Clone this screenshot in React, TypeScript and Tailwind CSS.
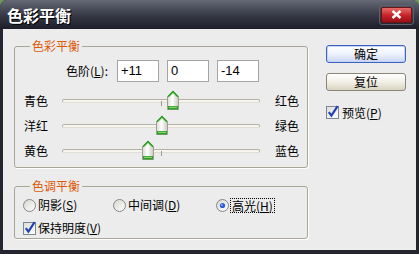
const sliders = [
  { left: "青色", right: "红色", value: 11 },
  { left: "洋红", right: "绿色", value: 0 },
  { left: "黄色", right: "蓝色", value: -14 },
];

function Thumb({ value }: { value: number }) {
  return (
    <svg
      className="absolute top-[-10px]"
      style={{ left: 93 + value }}
      width="12"
      height="20"
      viewBox="0 0 12 20"
    >
      <defs>
        <linearGradient id="thumbBody" x1="0" x2="1" y1="0" y2="0">
          <stop offset="0" stopColor="#dcdcd2" />
          <stop offset="0.45" stopColor="#ffffff" />
          <stop offset="1" stopColor="#c9c9be" />
        </linearGradient>
      </defs>
      <path d="M0.5 6.5 L6 1 L11.5 6.5 V19.5 H0.5 Z" fill="url(#thumbBody)" stroke="#9d9d92" />
      <path d="M1 6.8 L6 1.6 L11 6.8" fill="none" stroke="#2f9e2a" strokeWidth="1.6" />
      <path d="M2.6 6.6 L6 3.2 L9.4 6.6" fill="none" stroke="#8fd67f" strokeWidth="1" />
      <rect x="1" y="16" width="10" height="3.5" fill="#2f9e2a" />
      <rect x="2" y="16.8" width="8" height="1" fill="#9be37c" />
    </svg>
  );
}

function CheckBox() {
  return (
    <svg width="13" height="13" viewBox="0 0 13 13" className="shrink-0 overflow-visible">
      <defs>
        <linearGradient id="cbFill" x1="0" y1="0" x2="1" y2="1">
          <stop offset="0" stopColor="#dcdcd6" />
          <stop offset="1" stopColor="#ffffff" />
        </linearGradient>
      </defs>
      <rect x="0.5" y="0.5" width="12" height="12" fill="url(#cbFill)" stroke="#7c8794" />
      <path d="M2.8 6.2 L5.4 9.6 L11.6 0.2" fill="none" stroke="#2142b4" strokeWidth="2.2" />
    </svg>
  );
}

function Radio({ selected }: { selected?: boolean }) {
  return (
    <svg width="13" height="13" viewBox="0 0 13 13" className="shrink-0">
      <defs>
        <linearGradient id="rbFill" x1="0" y1="0" x2="1" y2="1">
          <stop offset="0" stopColor="#d6d6cf" />
          <stop offset="1" stopColor="#ffffff" />
        </linearGradient>
      </defs>
      <circle cx="6.5" cy="6.5" r="6" fill="url(#rbFill)" stroke="#878787" />
      {selected && <circle cx="6.5" cy="6.5" r="2.6" fill="#2b5bd4" />}
      {selected && <circle cx="5.9" cy="5.9" r="1" fill="#8fb0f5" />}
    </svg>
  );
}

function Legend({ children }: { children: string }) {
  return (
    <span className="absolute left-[15px] top-[-8px] bg-[#ececec] px-[2px] text-[12px] leading-[14px] text-[#dd5a0b]">
      {children}
    </span>
  );
}

export default function App() {
  return (
    <div className="h-[254px] w-[419px] bg-[#6e9a56] font-['Noto_Sans_CJK_SC',sans-serif] text-[12px] text-black">
      <div className="flex h-full w-full flex-col rounded-t-[7px] bg-[#23252f]">
        {/* title bar */}
        <div className="flex h-[29px] items-center justify-between rounded-t-[7px] bg-gradient-to-b from-[#666a76] via-[#393c48] to-[#1c1e28] pl-[7px] pr-[5px]">
          <span className="text-[16px] font-bold leading-none text-white [text-shadow:1px_1px_0_#000]">
            色彩平衡
          </span>
          <div className="rounded-[3px] border border-[#5d606c] p-[1px]">
            <div className="flex h-[16px] w-[31px] items-center justify-center rounded-[2px] border border-[#6a1414] bg-gradient-to-b from-[#e86a6a] via-[#c8242a] to-[#9a1016]">
              <svg width="11" height="9" viewBox="0 0 11 9">
                <path d="M1.5 1 L9.5 8 M9.5 1 L1.5 8" stroke="#ffffff" strokeWidth="2.4" />
              </svg>
            </div>
          </div>
        </div>

        {/* body */}
        <div className="mx-[3px] mb-[4px] flex flex-1 gap-[18px] bg-[#ececec] pl-[11px] pt-[16px]">
          <div className="flex w-[294px] flex-col pt-[1px]">
            {/* 色彩平衡 group */}
            <div className="relative h-[122px] rounded-[3px] border border-[#a9a698] shadow-[1px_1px_0_0_#ffffff]">
              <Legend>色彩平衡</Legend>
              <div className="mt-[13px] flex h-[22px] items-center pl-[49px]">
                <span className="flex w-[44px] justify-end whitespace-nowrap">
                  色阶(<span className="underline">L</span>):
                </span>
                {["+11", "0", "-14"].map((v, i) => (
                  <div
                    key={i}
                    className={`flex h-[22px] w-[42px] items-center border border-[#a4a4a8] bg-white pl-[3px] font-['Liberation_Sans',sans-serif] text-[13px] ${i === 0 ? "ml-[9px]" : "ml-[8px]"}`}
                  >
                    {v}
                  </div>
                ))}
              </div>
              <div className="mt-[6px] flex flex-col">
                {sliders.map((s) => (
                  <div key={s.left} className="flex h-[25px] items-center pl-[9px]">
                    <span className="w-[38px]">{s.left}</span>
                    <div className="relative h-[4px] w-[198px] rounded-[2px] border border-[#b3b1a4] border-b-[#e0ded4] bg-[#f6f5ef]">
                      <div className="absolute left-[98px] top-[1px] h-[5px] w-[1px] bg-[#9c9a8e]" />
                      <Thumb value={s.value} />
                    </div>
                    <span className="ml-[15px]">{s.right}</span>
                  </div>
                ))}
              </div>
            </div>

            {/* 色调平衡 group */}
            <div className="relative mt-[18px] h-[53px] rounded-[3px] border border-[#a9a698] shadow-[1px_1px_0_0_#ffffff]">
              <Legend>色调平衡</Legend>
              <div className="mt-[10px] flex h-[16px] items-center pl-[8px]">
                <div className="flex w-[90px] items-center gap-[2px]">
                  <Radio />
                  <span>
                    阴影(<span className="underline">S</span>)
                  </span>
                </div>
                <div className="flex w-[103px] items-center gap-[2px]">
                  <Radio />
                  <span>
                    中间调(<span className="underline">D</span>)
                  </span>
                </div>
                <div className="flex items-center gap-[1px]">
                  <Radio selected />
                  <span className="border border-dotted border-black px-[1px] leading-[13px]">
                    高光(<span className="underline">H</span>)
                  </span>
                </div>
              </div>
              <div className="mt-[7px] flex h-[16px] items-center gap-[2px] pl-[8px]">
                <CheckBox />
                <span>
                  保持明度(<span className="underline">V</span>)
                </span>
              </div>
            </div>
          </div>

          {/* right column */}
          <div className="flex w-[80px] flex-col">
            <button className="flex h-[18px] w-[80px] items-center justify-center rounded-[3px] border border-[#3c62bd] bg-gradient-to-b from-[#ffffff] via-[#eef2fb] to-[#c9d6f3] shadow-[inset_0_0_0_1px_#c4d4f6] text-[12px] leading-none">
              确定
            </button>
            <button className="mt-[10px] flex h-[18px] w-[80px] items-center justify-center rounded-[3px] border border-[#8a8676] bg-gradient-to-b from-[#ffffff] via-[#f1efe6] to-[#d8d3c2] text-[12px] leading-none">
              复位
            </button>
            <div className="mt-[15px] flex h-[13px] items-center gap-[3px]">
              <CheckBox />
              <span>
                预览(<span className="underline">P</span>)
              </span>
            </div>
          </div>
        </div>
      </div>
    </div>
  );
}
